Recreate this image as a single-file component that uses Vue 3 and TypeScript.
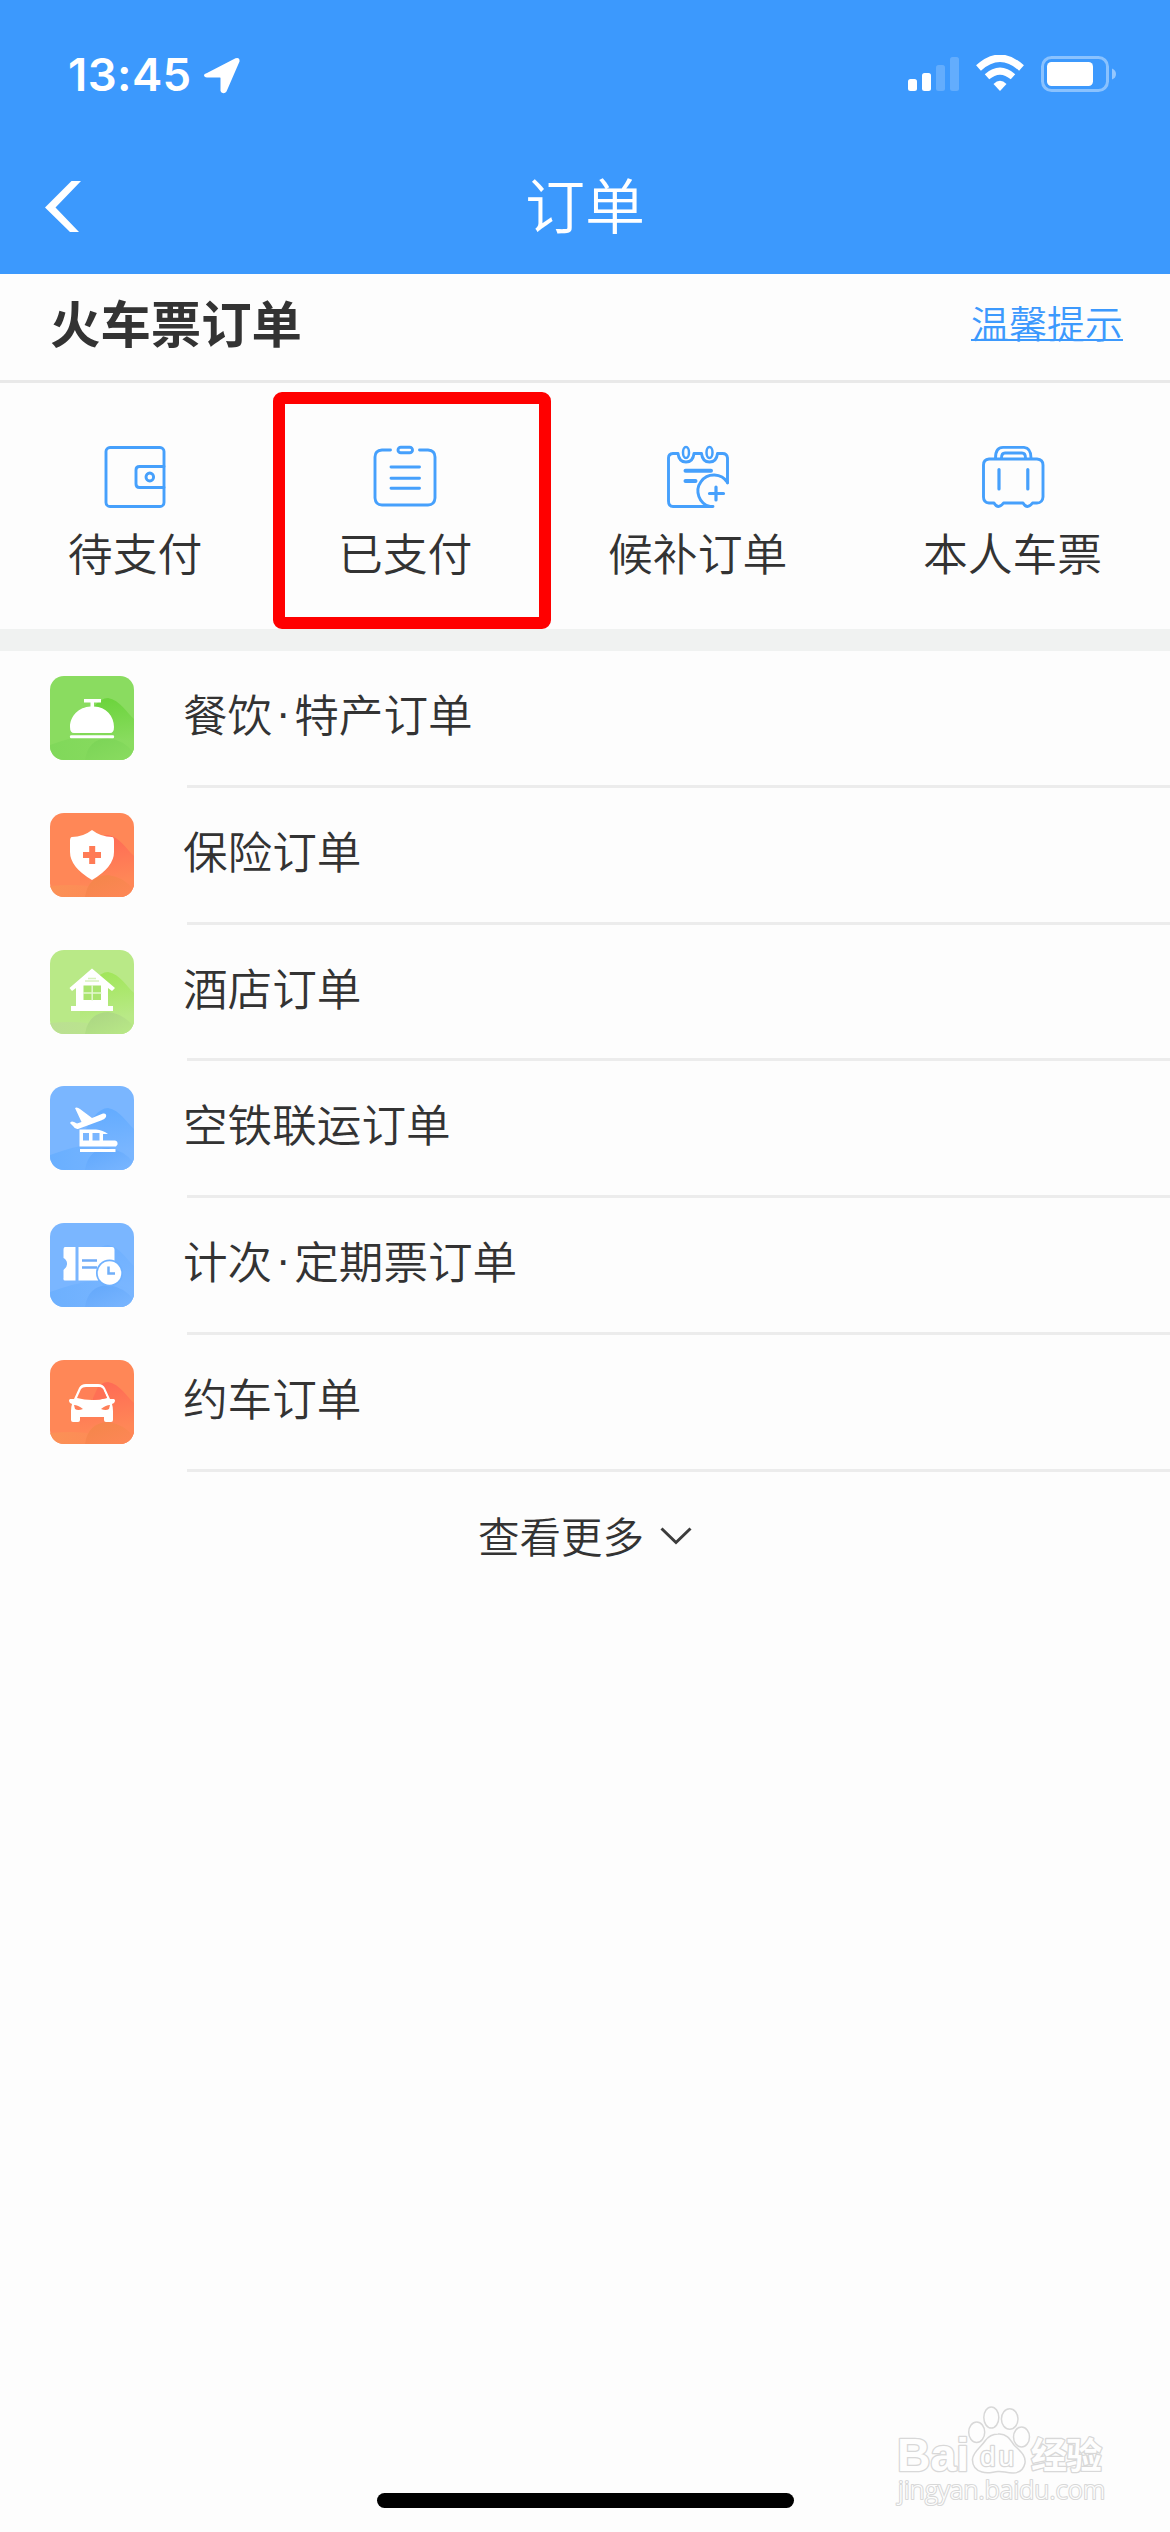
<script setup lang="ts">
interface OrderTab {
  id: 'wallet' | 'clipboard' | 'calendar' | 'suitcase'
  label: string
  marked?: boolean
}

interface OrderRow {
  id: 'food' | 'insurance' | 'hotel' | 'airrail' | 'pass' | 'car'
  parts: string[]
  bg: string
  hill: string
  ground: string
  mound: string
}

const tabs: OrderTab[] = [
  { id: 'wallet', label: '待支付' },
  { id: 'clipboard', label: '已支付', marked: true },
  { id: 'calendar', label: '候补订单' },
  { id: 'suitcase', label: '本人车票' },
]

const rows: OrderRow[] = [
  { id: 'food', parts: ['餐饮', '特产订单'], bg: '#8adc60', hill: '#6dd43e', ground: '#80d85a', mound: '#7dd558' },
  { id: 'insurance', parts: ['保险订单'], bg: '#ff8757', hill: '#ff6c55', ground: '#fb9156', mound: '#f5864c' },
  { id: 'hotel', parts: ['酒店订单'], bg: '#b9e987', hill: '#a2e65c', ground: '#bbdf93', mound: '#add884' },
  { id: 'airrail', parts: ['空铁联运订单'], bg: '#7ab6ff', hill: '#64acff', ground: '#69afff', mound: '#64aafd' },
  { id: 'pass', parts: ['计次', '定期票订单'], bg: '#7ab6ff', hill: '#70b1ff', ground: '#6db0fe', mound: '#67aafb' },
  { id: 'car', parts: ['约车订单'], bg: '#ff8757', hill: '#ff6c55', ground: '#fb9156', mound: '#f5864c' },
]
</script>

<template>
  <div class="screen">
    <header class="top">
      <div class="status">
        <div class="status-left">
          <span class="time">13:45</span>
          <svg class="locate" width="36" height="37" viewBox="0 0 36 37">
            <path d="M3 16 31.500 1.300Q36 0 35.500 4.500L22.500 34.500Q20.500 37.500 17.500 35.500L16.500 34V21Q16.500 20.500 16 20.500H3Q0 20 0 18Q0 17 3 16Z" fill="#fff" />
          </svg>
        </div>
        <svg class="status-icons" width="210" height="38" viewBox="0 0 210 38">
          <g fill="#fff">
            <rect x="1" y="24" width="9" height="12" rx="2.500" />
            <rect x="15" y="18" width="9" height="18" rx="2.500" />
            <rect x="29" y="10" width="9" height="26" rx="2.500" opacity=".2" />
            <rect x="43" y="2" width="9" height="34" rx="2.500" opacity=".2" />
            <path d="M93 36 86.500 29Q93 22.500 99.500 29Z" />
          </g>
          <g fill="none" stroke="#fff">
            <path d="M71.500 13Q93-6.500 114.500 13" stroke-width="7.200" />
            <path d="M80 21.800Q93 10.500 106 21.800" stroke-width="6.800" />
            <rect x="135.500" y="2.500" width="65" height="33" rx="9" stroke-width="3" opacity=".4" />
          </g>
          <rect x="140" y="7" width="46" height="24" rx="4.500" fill="#fff" />
          <path d="M205 13.500Q209 15 209 19T205 24.500Z" fill="#fff" opacity=".45" />
        </svg>
      </div>
      <div class="nav">
        <svg class="back" width="36" height="52" viewBox="0 0 36 52">
          <path d="M26.500 0H36L10.500 26.500 34 51H25L0 26.500Z" fill="#fff" />
        </svg>
        <h1>订单</h1>
        <span class="nav-spacer" />
      </div>
    </header>

    <section class="section-head">
      <h2>火车票订单</h2>
      <a class="tip">温馨提示</a>
    </section>

    <nav class="tabs">
      <div v-for="tab in tabs" :key="tab.id" class="tab">
        <svg width="64" height="64" viewBox="0 0 64 64" fill="none" stroke="#46a0fc" stroke-width="2.900" stroke-linecap="round" stroke-linejoin="round">
          <g v-if="tab.id === 'wallet'">
            <rect x="3" y="2.500" width="58" height="59" rx="4" />
            <path d="M61 21.500H36.500Q33 21.500 33 25V39Q33 42.500 36.500 42.500H61" />
            <ellipse cx="46.800" cy="32" rx="3.800" ry="4" />
          </g>
          <g v-else-if="tab.id === 'clipboard'">
            <path d="M17.500 5H9Q2 5.500 2 12V53Q2.500 60 9 60H55Q61.500 60 62 53V12Q62 5.500 55 5H46.500" />
            <rect x="25" y="2.200" width="14.500" height="5.600" rx="2.800" />
            <path d="M18 22H46.500M18 33.200H46.500M18 43.300H46.500" />
          </g>
          <g v-else-if="tab.id === 'calendar'">
            <path d="M61.500 38V13Q61 8.500 56.500 8.500H51.500Q50.500 17 43.500 17T35.500 8.500H28Q27 17 20 17T12 8.500H7Q2.500 9 2.500 13V56Q2.500 61.500 7 61.500H47" />
            <ellipse cx="20" cy="7.500" rx="3" ry="5.500" stroke-width="2.500" />
            <ellipse cx="43.500" cy="7.500" rx="3" ry="5.500" stroke-width="2.500" />
            <path d="M19.500 25.800H45M19.500 36H29.500" stroke-width="4" />
            <path d="M61.500 37.500A16 16 0 1 0 44 61.500" />
            <path d="M50 42V55M43.500 48.500H57.500" stroke-width="3.200" />
          </g>
          <g v-else>
            <path d="M8 14H56Q62 14.500 62 20V52Q61.500 58 56 58H51.500Q49 61.500 46.500 61.500T42 58H22.500Q20 61.500 17.500 61.500T13 58H8Q2.500 57.500 2.500 52V20Q2.500 14.500 8 14Z" />
            <path d="M14.500 13Q14.500 2.400 22 2.400H43Q50 3 50 13M20.500 13Q20.500 8 24 8H41Q44.500 8 44.500 13" />
            <path d="M18 24.500V44M46.800 24.500V44" stroke-width="3.200" />
          </g>
        </svg>
        <span class="tab-label">{{ tab.label }}</span>
        <i v-if="tab.marked" class="marker" />
      </div>
    </nav>

    <div class="band" />

    <ul class="list">
      <li v-for="row in rows" :key="row.id" class="row">
        <svg class="row-icon" width="84" height="84" viewBox="0 0 84 84">
          <defs>
            <linearGradient :id="`hill-${row.id}`" gradientUnits="userSpaceOnUse" x1="60" y1="24" x2="66" y2="68">
              <stop offset="0" :stop-color="row.hill" />
              <stop offset="1" :stop-color="row.bg" />
            </linearGradient>
            <linearGradient :id="`ground-${row.id}`" x1="0" y1="0" x2="1" y2="0">
              <stop offset="0" :stop-color="row.ground" />
              <stop offset="1" :stop-color="row.bg" />
            </linearGradient>
            <linearGradient :id="`mound-${row.id}`" x1="0" y1="0" x2="1" y2="1">
              <stop offset=".2" :stop-color="row.mound" />
              <stop offset="1" :stop-color="row.bg" />
            </linearGradient>
          </defs>
          <rect width="84" height="84" :fill="row.bg" />
          <path d="M30 56Q44 22 58 22C70 24 77 37 84 43V76H30Z" :fill="`url(#hill-${row.id})`" />
          <path v-if="row.id === 'insurance' || row.id === 'car' || row.id === 'hotel'" d="M0 73Q30 70 46 75L84 72V84H0Z" :fill="`url(#ground-${row.id})`" />
          <path v-else d="M0 69Q25 60 46 57L84 66V84H0Z" :fill="`url(#ground-${row.id})`" />
          <path d="M35 84Q38 63 58 62Q74 64 84 77V84Z" :fill="`url(#mound-${row.id})`" />

          <g v-if="row.id === 'food'" fill="#fff">
            <path d="M34 23H51V26.500H44V30.500C56 31 64 40 64 51Q64 57 60 57H24Q20 57 20 51C20 40 29 31 40.500 30.500V26.500H34Z" />
            <rect x="20" y="59.300" width="44" height="3" rx="1" />
          </g>
          <g v-else-if="row.id === 'insurance'">
            <path d="M42 17Q51 24 62 24Q64 24 64 28V39Q64 54 42 67Q20 54 20 39V28Q20 24 22 24Q33 24 42 17Z" fill="#fff" />
            <path d="M42.200 33V51M33 42H51" stroke="#ff7b56" stroke-width="6" />
          </g>
          <g v-else-if="row.id === 'hotel'">
            <path d="M42 18.500 65 38 62 41 58 38V56H63V61H21V56H26V38L22 41 19.500 38Z" fill="#fff" />
            <rect x="33.500" y="35.500" width="17.500" height="14.500" fill="#aae46f" />
            <path d="M42.200 35V50.500M33 43H51.500" stroke="#e4f7d0" stroke-width="1.500" />
            <path d="M35 31H49M38 28.500H46" stroke="#d8f2bd" stroke-width="1.500" />
          </g>
          <g v-else-if="row.id === 'airrail'">
            <path d="M25 22Q27 20.500 30 23L42 32L53 27.500Q57 27 56 31Q55 33 51 34.500L28 43Q25 43.500 23 40L20 37Q21 34.500 24 36L27 37.500L31.500 36Z" fill="#fff" />
            <path d="M29.500 43.500H46Q53 44 58 48H53V54.500H65Q68 55 67.500 58.500L66 60.500H29.500ZM30 63H65.500V66H30Z" fill="#fff" />
            <path d="M33 47H39V54.500H33ZM42.500 47H49.500V54.500H42.500Z" fill="#7ab6ff" />
          </g>
          <g v-else-if="row.id === 'pass'">
            <path d="M15 24H25.500V57.500H15Q13 57.500 13.500 55V47Q17.500 44 17 40.500Q17 37 13.500 35V27Q13.500 24 15 24ZM28.500 24H62Q64.500 24 64.500 27V40L48 57.500H28.500Z" fill="#fff" />
            <path d="M32 37.500H47M32 44.500H47" stroke="#70acf8" stroke-width="2.500" />
            <circle cx="59.500" cy="50" r="13.500" fill="#6fb1ff" />
            <circle cx="59.500" cy="50" r="11.800" fill="#fff" />
            <path d="M58.500 43.500V50.500H65" fill="none" stroke="#70aff9" stroke-width="2.500" />
          </g>
          <g v-else>
            <path d="M20 39H24L29 28Q31 24 36 24H48Q53 24 55 28L60 39H64Q66 40 64 43L62 44Q63 47 63 51V60Q63 62 61 62H56Q54 62 54 60V57H30V60Q30 62 28 62H23Q21 62 21 60V51Q21 47 22 44L20 43Q18 40 20 39Z" fill="#fff" />
            <path d="M31 29Q32.500 27 36 27H48Q51.500 27 53 29L57 38Q42 42 27 38Z" fill="#ff8057" />
            <path d="M43 38 48 27Q51.500 27 53 29L57 38Q50 40 43 40Z" fill="#ff7055" />
            <path d="M24 45Q28 45 33 49Q28 51 25 49ZM60 45Q56 45 51 49Q56 51 59 49Z" fill="#ff7f58" />
          </g>
        </svg>
        <div class="row-body">
          <template v-for="(part, i) in row.parts" :key="part">
            <span v-if="i > 0" class="dot">·</span><span class="part">{{ part }}</span>
          </template>
        </div>
      </li>
    </ul>

    <div class="more">
      <span>查看更多</span>
      <svg width="32" height="18" viewBox="0 0 32 18">
        <path d="M1.500 1.500 16 15.500 30.500 1.500" fill="none" stroke="#3c3c3c" stroke-width="3" />
      </svg>
    </div>

    <footer class="bottom"><i class="home-bar" /></footer>

    <svg class="watermark" width="310" height="152" viewBox="0 0 310 152">
      <g fill="#fefefe" stroke="#d8d8d8" stroke-width="1.500" stroke-linejoin="round">
        <ellipse cx="116.700" cy="52.300" rx="8" ry="10.200" />
        <ellipse cx="131.300" cy="37.500" rx="7.500" ry="10.600" />
        <ellipse cx="149.700" cy="39" rx="8.300" ry="10.200" />
        <ellipse cx="161.500" cy="57" rx="8" ry="10" />
        <path d="M138 54C146 53 150 59 154 65C160 71 166 75 165 83Q163 93 153 93C146 93 143 91 138 91.500C132 92 128 94 122 92Q112 89 112.500 79C113 72 121 67 125 61Q130 54 138 54Z" />
        <g paint-order="stroke" stroke-width="2.600" font-weight="700">
          <text x="37" y="91" font-size="46" textLength="72" lengthAdjust="spacingAndGlyphs">Bai</text>
          <text x="120" y="86" font-size="28" font-weight="400" textLength="34">du</text>
          <text x="171" y="89" font-size="36" textLength="71" class="cjk">经验</text>
        </g>
        <text x="38" y="119" font-size="25" paint-order="stroke" stroke-width="2.200" textLength="207" class="url">jingyan.baidu.com</text>
      </g>
    </svg>
  </div>
</template>

<style>
body {
  margin: 0;
  background: #fdfdfd;
}
</style>

<style scoped>
.screen {
  position: relative;
  display: flex;
  flex-direction: column;
  width: 1170px;
  height: 2532px;
  overflow: hidden;
  background: #fdfdfd;
  color: #333;
  font-family: "Noto Sans CJK SC", sans-serif;
  font-weight: 350;
}
.top {
  height: 274px;
  background: #3c99fd;
  color: #fff;
}
.status {
  display: flex;
  justify-content: space-between;
  height: 141px;
  padding: 0 53px 0 68px;
  box-sizing: border-box;
}
.status-left {
  display: flex;
}
.time {
  width: 136px;
  padding-top: 47px;
  font: 600 45.500px/56px Inter, sans-serif;
  letter-spacing: .4px;
}
.locate {
  margin-top: 57px;
}
.status-icons {
  margin-top: 55px;
}
.nav {
  display: flex;
  justify-content: space-between;
  align-items: center;
  height: 131px;
  padding: 0 45px;
}
.nav-spacer {
  width: 36px;
}
h1 {
  margin: 0;
  padding-bottom: 8px;
  font-size: 60px;
  line-height: 80px;
  font-weight: 350;
}
.section-head {
  display: flex;
  align-items: center;
  justify-content: space-between;
  box-sizing: border-box;
  height: 109px;
  padding: 0 47px 10px 50px;
  border-bottom: 3px solid #e9e9e9;
}
h2 {
  margin: 0;
  font-size: 50.400px;
  line-height: 74px;
  font-weight: 700;
}
.tip {
  color: #3c99fd;
  font-size: 38px;
  line-height: 56px;
  text-decoration: underline;
  text-decoration-thickness: 2px;
}
.tabs {
  display: flex;
  justify-content: space-around;
  height: 246px;
}
.tab {
  position: relative;
  display: flex;
  flex-direction: column;
  align-items: center;
  padding-top: 62px;
}
.tab-label {
  margin-top: 13px;
  font-size: 44.800px;
  line-height: 60px;
}
.marker {
  position: absolute;
  top: 9px;
  left: -65px;
  width: 254px;
  height: 213px;
  border: 12px solid #f00;
  border-radius: 9px;
}
.band {
  height: 22px;
  background: #f0f2f1;
}
.list {
  margin: 0;
  padding: 0;
  list-style: none;
}
.row {
  display: flex;
  gap: 53px;
  height: 136.750px;
  padding-left: 50px;
}
.row-icon {
  flex: none;
  margin-top: 25px;
  border-radius: 14px;
}
.row-body {
  display: flex;
  flex: 1;
  box-sizing: border-box;
  height: 136.750px;
  padding-top: 32px;
  font-size: 44.600px;
  line-height: 60px;
  border-bottom: 3px solid #ececec;
}
.part:first-child {
  margin-left: -4px;
}
.dot {
  width: 22px;
  text-align: center;
  font-family: "Liberation Sans", sans-serif;
}
.more {
  display: flex;
  align-items: center;
  justify-content: center;
  gap: 16px;
  height: 126px;
  font-size: 41.500px;
}
.more svg {
  margin-top: 3px;
}
.bottom {
  display: flex;
  justify-content: center;
  margin-top: auto;
  padding-bottom: 24px;
}
.home-bar {
  width: 417px;
  height: 15px;
  border-radius: 8px;
  background: #000;
}
.watermark {
  position: absolute;
  left: 860px;
  top: 2380px;
  font-family: "Liberation Sans", sans-serif;
}
.cjk {
  font-family: "Noto Sans CJK SC", sans-serif;
}
.url {
  font-family: "Open Sans", sans-serif;
}
</style>
